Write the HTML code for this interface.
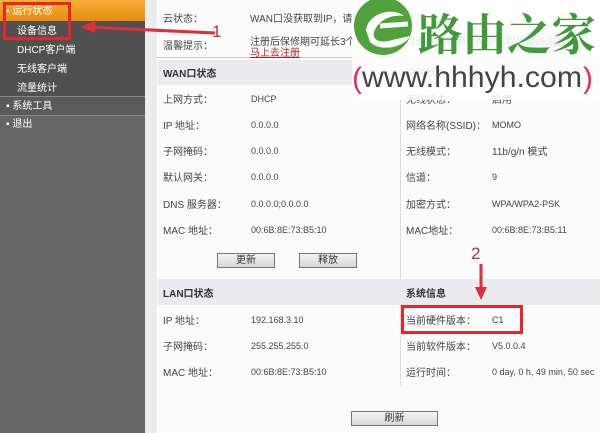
<!DOCTYPE html>
<html><head><meta charset="utf-8"><style>
*{margin:0;padding:0;box-sizing:border-box}
body{width:600px;height:433px;overflow:hidden;position:relative;background:#f6f6f6;font-family:"Liberation Sans","Noto Sans CJK SC",sans-serif;font-size:10px;color:#444}
.a{position:absolute;white-space:nowrap;line-height:12px}
.t{margin-top:2px}
.v{font-size:9px;margin-top:0px}
.side{position:absolute;left:0;top:0;width:145px;height:433px;background:#666}
.w{color:#fff;margin-top:2px}
.btn{position:absolute;height:15px;border:1px solid #777;background:linear-gradient(#f4f4f4,#d8d8d8);text-align:center;font-size:10px;line-height:13px;color:#333}
</style></head><body>
<div class="side"></div>
<div class="a" style="left:0;top:0;width:145px;height:21px;background:linear-gradient(#f7b03a,#e88a10)"></div>
<div class="a w" style="left:6px;top:4px">▪ 运行状态</div>
<div class="a" style="left:0;top:21px;width:145px;height:76px;background:#505050"></div>
<div class="a w" style="left:17px;top:24px">设备信息</div>
<div class="a w" style="left:17px;top:43px">DHCP客户端</div>
<div class="a w" style="left:17px;top:62px">无线客户端</div>
<div class="a w" style="left:17px;top:81px">流量统计</div>
<div class="a" style="left:0;top:96px;width:145px;height:1px;background:#888"></div>
<div class="a" style="left:0;top:97px;width:145px;height:18px;background:#5a5a5a"></div>
<div class="a w" style="left:6px;top:99px">▪ 系统工具</div>
<div class="a" style="left:0;top:115px;width:145px;height:1px;background:#888"></div>
<div class="a w" style="left:6px;top:117px">▪ 退出</div>
<div class="a" style="left:3px;top:2px;width:68px;height:38px;border:3px solid #e8262a"></div>

<div class="a" style="left:145px;top:0;width:12px;height:433px;background:#ececec"></div>
<div class="a" style="left:157px;top:0;width:443px;height:433px;background:#fbfbfb"></div>
<div class="a" style="left:157px;top:57px;width:443px;height:1px;background:#ccc"></div>
<div class="a t" style="left:163px;top:12px">云状态：</div>
<div class="a t" style="left:250px;top:12px">WAN口没获取到IP，请检查...</div>
<div class="a t" style="left:163px;top:39px">温馨提示：</div>
<div class="a t" style="left:250px;top:35px">注册后保修期可延长3个月，并且可以通过手机使用APP远程管理路由器</div>
<div class="a t" style="left:250px;top:46px;color:#b22;text-decoration:underline">马上去注册</div>

<div class="a" style="left:158px;top:60px;width:442px;height:25px;background:#ebebef"></div>
<div class="a t" style="left:163px;top:67px;font-weight:bold;color:#333">WAN口状态</div>
<div class="a t" style="left:406px;top:67px;font-weight:bold;color:#999">无线状态</div>
<div class="a" style="left:400px;top:60px;width:1px;height:325px;background:#ddd"></div>

<div class="a t" style="left:163px;top:93px">上网方式：</div><div class="a v" style="left:251px;top:93px">DHCP</div>
<div class="a t" style="left:163px;top:119px">IP 地址：</div><div class="a v" style="left:251px;top:119px">0.0.0.0</div>
<div class="a t" style="left:163px;top:145px">子网掩码：</div><div class="a v" style="left:251px;top:145px">0.0.0.0</div>
<div class="a t" style="left:163px;top:171px">默认网关：</div><div class="a v" style="left:251px;top:171px">0.0.0.0</div>
<div class="a t" style="left:163px;top:198px">DNS 服务器：</div><div class="a v" style="left:251px;top:198px">0.0.0.0;0.0.0.0</div>
<div class="a t" style="left:163px;top:224px">MAC 地址：</div><div class="a v" style="left:251px;top:224px">00:6B:8E:73:B5:10</div>

<div class="a t" style="left:406px;top:93px">无线状态：</div><div class="a t" style="left:492px;top:93px">启用</div>
<div class="a t" style="left:406px;top:119px">网络名称(SSID)：</div><div class="a v" style="left:492px;top:119px">MOMO</div>
<div class="a t" style="left:406px;top:145px">无线模式：</div><div class="a t" style="left:492px;top:145px">11b/g/n 模式</div>
<div class="a t" style="left:406px;top:171px">信道：</div><div class="a v" style="left:492px;top:171px">9</div>
<div class="a t" style="left:406px;top:198px">加密方式：</div><div class="a v" style="left:492px;top:198px">WPA/WPA2-PSK</div>
<div class="a t" style="left:406px;top:224px">MAC地址：</div><div class="a v" style="left:492px;top:224px">00:6B:8E:73:B5:11</div>

<div class="btn" style="left:217px;top:253px;width:58px">更新</div>
<div class="btn" style="left:299px;top:253px;width:58px">释放</div>

<div class="a" style="left:158px;top:279px;width:442px;height:26px;background:#ebebef"></div>
<div class="a t" style="left:163px;top:287px;font-weight:bold;color:#333">LAN口状态</div>
<div class="a t" style="left:406px;top:287px;font-weight:bold;color:#333">系统信息</div>
<div class="a t" style="left:163px;top:314px">IP 地址：</div><div class="a v" style="left:251px;top:314px">192.168.3.10</div>
<div class="a t" style="left:163px;top:340px">子网掩码：</div><div class="a v" style="left:251px;top:340px">255.255.255.0</div>
<div class="a t" style="left:163px;top:366px">MAC 地址：</div><div class="a v" style="left:251px;top:366px">00:6B:8E:73:B5:10</div>
<div class="a t" style="left:406px;top:314px">当前硬件版本：</div><div class="a v" style="left:492px;top:314px">C1</div>
<div class="a t" style="left:406px;top:340px">当前软件版本：</div><div class="a v" style="left:492px;top:340px">V5.0.0.4</div>
<div class="a t" style="left:406px;top:366px">运行时间：</div><div class="a v" style="left:492px;top:366px">0 day, 0 h, 49 min, 50 sec</div>
<div class="a" style="left:401px;top:305px;width:122px;height:29px;border:3px solid #e8262a"></div>

<div class="btn" style="left:351px;top:411px;width:87px">刷新</div>

<svg class="a" style="left:0;top:0" width="600" height="433">
<path d="M85 27 L215 33" stroke="#d9303a" stroke-width="3"/>
<path d="M80 27 L96 20 L95 33 Z" fill="#d9303a"/>
<text x="212" y="37" fill="#c0303a" font-size="17" font-family="Liberation Sans">1</text>
<text x="471" y="259" fill="#c0303a" font-size="17" font-family="Liberation Sans">2</text>
<path d="M481 264 L481 290" stroke="#d9303a" stroke-width="3"/>
<path d="M475 287 L487 287 L481 300 Z" fill="#d9303a"/>
<rect x="352" y="0" width="248" height="100" fill="#fff" opacity="0.85"/>
<circle cx="383" cy="26" r="29" fill="#4fa33a"/>
<path d="M366 30 C368 14 392 6 404 16 C392 14 378 20 374 32 C372 40 380 44 392 40 L410 36 C404 48 380 52 370 42 Z" fill="#fff"/>
<path d="M380 26 L408 24" stroke="#fff" stroke-width="5"/>
<text x="418" y="50" fill="#3f9a3a" font-size="44" font-weight="bold" font-family="Noto Serif CJK SC, serif" textLength="178" lengthAdjust="spacingAndGlyphs">路由之家</text>
<text x="352" y="88" fill="#e0305a" font-size="30" font-family="Liberation Sans">(</text>
<text x="362" y="87" fill="#444" font-size="30" font-family="Liberation Sans" textLength="220" lengthAdjust="spacingAndGlyphs">www.hhhyh.com</text>
<text x="583" y="88" fill="#e0305a" font-size="30" font-family="Liberation Sans">)</text>
</svg>
</body></html>
